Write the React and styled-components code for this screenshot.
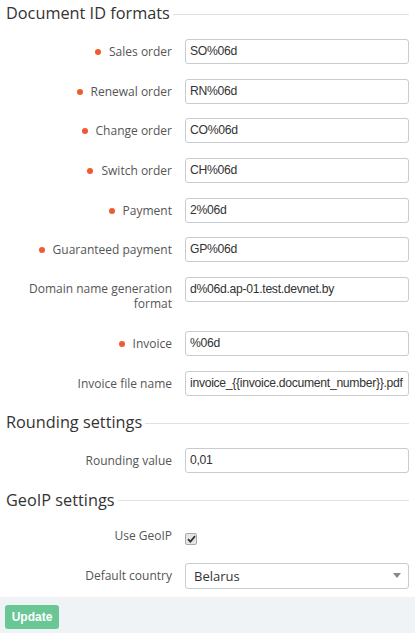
// Dependencies
import React from "react";
import styled, { createGlobalStyle } from "styled-components";

// Styled-Components
const GlobalStyle = createGlobalStyle`
  html, body {
    margin: 0;
    padding: 0;
    background: #fff;
  }
  body {
    font-family: "Open Sans", "Liberation Sans", sans-serif;
    color: #333;
  }
`;
const Page = styled.div`
  width: 415px;
  height: 633px;
  display: flex;
  flex-direction: column;
  overflow: hidden;
`;
const Form = styled.div`
  padding: 1px 6px 8px 6px;
`;
const Heading = styled.div`
  display: flex;
  align-items: center;
  gap: 3px;
  font-size: 16.3px;
  line-height: 24px;
  color: #333;
  margin-bottom: 14px;
  &::after {
    content: "";
    flex: 1;
    height: 1px;
    background: #dde1e5;
    margin-top: 2px;
  }
`;
const Row = styled.div`
  display: grid;
  grid-template-columns: 166px 224px;
  column-gap: 13px;
  align-items: start;
  margin-bottom: ${(p) => (p.$last ? "0" : "14.7px")};
`;
const Label = styled.label`
  text-align: right;
  font-size: 12px;
  line-height: 15px;
  padding: ${(p) => (p.$check ? "2px 0 0" : p.$wrap ? "4px 0 5px" : "5px 0 0")};
  color: #555;
`;
const Bullet = styled.span`
  display: inline-block;
  width: 6px;
  height: 6px;
  border-radius: 50%;
  background: #f05a30;
  margin-right: 8px;
  vertical-align: 1px;
`;
const Input = styled.div`
  box-sizing: border-box;
  height: 25px;
  border: 1px solid #c8cbd0;
  border-radius: 3px;
  padding: 0 3px 0 4px;
  font-family: "Liberation Sans", Arial, sans-serif;
  font-size: 12.2px;
  letter-spacing: -0.3px;
  line-height: 23px;
  color: #333;
  white-space: nowrap;
  overflow: hidden;
`;
const Select = styled.div`
  box-sizing: border-box;
  height: 26px;
  border: 1px solid #c8cbd0;
  border-radius: 3px;
  padding: 0 8px;
  font-size: 13px;
  line-height: 24px;
  color: #333;
  display: flex;
  justify-content: space-between;
  align-items: center;
`;
const Arrow = styled.span`
  width: 0;
  height: 0;
  border-left: 4px solid transparent;
  border-right: 4px solid transparent;
  border-top: 5px solid #888;
  margin-right: -1px;
`;
const CheckBox = styled.span`
  box-sizing: border-box;
  display: inline-flex;
  align-items: center;
  justify-content: center;
  width: 12px;
  height: 12px;
  margin-top: 5px;
  border: 1px solid #a9a9a9;
  border-radius: 2px;
  background: #e6e6e6;
`;
const Footer = styled.div`
  flex: 1;
  background: #f0f3f6;
  padding: 7px 5px;
`;
const Button = styled.button`
  width: 54px;
  height: 24px;
  border: none;
  border-radius: 3px;
  background: #68c795;
  color: #fff;
  font-family: "Liberation Sans", Arial, sans-serif;
  font-weight: bold;
  font-size: 12px;
  padding: 0;
`;

const documentFields = [
  { label: "Sales order", value: "SO%06d", required: true },
  { label: "Renewal order", value: "RN%06d", required: true },
  { label: "Change order", value: "CO%06d", required: true },
  { label: "Switch order", value: "CH%06d", required: true },
  { label: "Payment", value: "2%06d", required: true },
  { label: "Guaranteed payment", value: "GP%06d", required: true },
  { label: "Domain name generation format", value: "d%06d.ap-01.test.devnet.by", wrap: true },
  { label: "Invoice", value: "%06d", required: true },
  { label: "Invoice file name", value: "invoice_{{invoice.document_number}}.pdf" },
];

// React Component
const App = () => {
  return (
    <Page>
      <GlobalStyle />
      <Form>
        <Heading>Document ID formats</Heading>
        {documentFields.map((f) => (
          <Row key={f.label}>
            <Label $wrap={f.wrap}>
              {f.required && <Bullet />}
              {f.label}
            </Label>
            <Input>{f.value}</Input>
          </Row>
        ))}
        <Heading>Rounding settings</Heading>
        <Row>
          <Label>Rounding value</Label>
          <Input>0,01</Input>
        </Row>
        <Heading>GeoIP settings</Heading>
        <Row>
          <Label $check>Use GeoIP</Label>
          <div>
            <CheckBox>
              <svg width="9" height="8" viewBox="0 0 9 8">
                <path d="M1 4.2 L3.4 6.6 L8 1.2" fill="none" stroke="#333" strokeWidth="1.8" />
              </svg>
            </CheckBox>
          </div>
        </Row>
        <Row $last>
          <Label>Default country</Label>
          <Select>
            Belarus
            <Arrow />
          </Select>
        </Row>
      </Form>
      <Footer>
        <Button>Update</Button>
      </Footer>
    </Page>
  );
};

export default App;
